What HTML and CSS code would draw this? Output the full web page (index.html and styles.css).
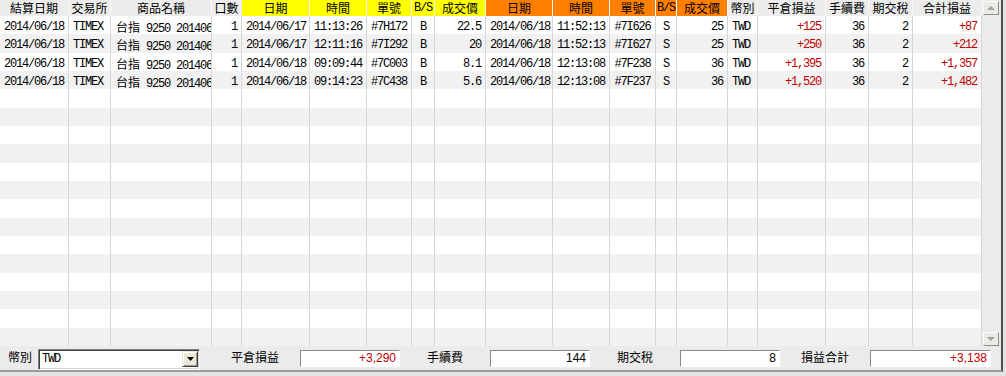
FILE: index.html
```html
<!DOCTYPE html>
<html lang="zh-Hant">
<head>
<meta charset="utf-8">
<title>平倉明細</title>
<link rel="stylesheet" href="styles.css">
</head>
<body>
<div class="window">
  <div class="main">
    <div class="grid">
      <div class="row head">
        <span>結算日期</span><span>交易所</span><span>商品名稱</span><span>口數</span>
        <span class="y">日期</span><span class="y">時間</span><span class="y">單號</span><span class="y mono">B/S</span><span class="y">成交價</span>
        <span class="o">日期</span><span class="o">時間</span><span class="o">單號</span><span class="o mono">B/S</span><span class="o">成交價</span>
        <span>幣別</span><span>平倉損益</span><span>手續費</span><span>期交稅</span><span>合計損益</span>
      </div>
      <div class="body">
        <div class="row"><span>2014/06/18</span><span>TIMEX</span><span><b class="cjk">台指</b> 9250 201406</span><span>1</span><span>2014/06/17</span><span>11:13:26</span><span>#7H172</span><span>B</span><span>22.5</span><span>2014/06/18</span><span>11:52:13</span><span>#7I626</span><span>S</span><span>25</span><span>TWD</span><span>+125</span><span>36</span><span>2</span><span>+87</span></div>
        <div class="row"><span>2014/06/18</span><span>TIMEX</span><span><b class="cjk">台指</b> 9250 201406</span><span>1</span><span>2014/06/17</span><span>12:11:16</span><span>#7I292</span><span>B</span><span>20</span><span>2014/06/18</span><span>11:52:13</span><span>#7I627</span><span>S</span><span>25</span><span>TWD</span><span>+250</span><span>36</span><span>2</span><span>+212</span></div>
        <div class="row"><span>2014/06/18</span><span>TIMEX</span><span><b class="cjk">台指</b> 9250 201406</span><span>1</span><span>2014/06/18</span><span>09:09:44</span><span>#7C003</span><span>B</span><span>8.1</span><span>2014/06/18</span><span>12:13:08</span><span>#7F238</span><span>S</span><span>36</span><span>TWD</span><span>+1,395</span><span>36</span><span>2</span><span>+1,357</span></div>
        <div class="row"><span>2014/06/18</span><span>TIMEX</span><span><b class="cjk">台指</b> 9250 201406</span><span>1</span><span>2014/06/18</span><span>09:14:23</span><span>#7C438</span><span>B</span><span>5.6</span><span>2014/06/18</span><span>12:13:08</span><span>#7F237</span><span>S</span><span>36</span><span>TWD</span><span>+1,520</span><span>36</span><span>2</span><span>+1,482</span></div>
        <div class="row"><span></span><span></span><span></span><span></span><span></span><span></span><span></span><span></span><span></span><span></span><span></span><span></span><span></span><span></span><span></span><span></span><span></span><span></span><span></span></div>
        <div class="row"><span></span><span></span><span></span><span></span><span></span><span></span><span></span><span></span><span></span><span></span><span></span><span></span><span></span><span></span><span></span><span></span><span></span><span></span><span></span></div>
        <div class="row"><span></span><span></span><span></span><span></span><span></span><span></span><span></span><span></span><span></span><span></span><span></span><span></span><span></span><span></span><span></span><span></span><span></span><span></span><span></span></div>
        <div class="row"><span></span><span></span><span></span><span></span><span></span><span></span><span></span><span></span><span></span><span></span><span></span><span></span><span></span><span></span><span></span><span></span><span></span><span></span><span></span></div>
        <div class="row"><span></span><span></span><span></span><span></span><span></span><span></span><span></span><span></span><span></span><span></span><span></span><span></span><span></span><span></span><span></span><span></span><span></span><span></span><span></span></div>
        <div class="row"><span></span><span></span><span></span><span></span><span></span><span></span><span></span><span></span><span></span><span></span><span></span><span></span><span></span><span></span><span></span><span></span><span></span><span></span><span></span></div>
        <div class="row"><span></span><span></span><span></span><span></span><span></span><span></span><span></span><span></span><span></span><span></span><span></span><span></span><span></span><span></span><span></span><span></span><span></span><span></span><span></span></div>
        <div class="row"><span></span><span></span><span></span><span></span><span></span><span></span><span></span><span></span><span></span><span></span><span></span><span></span><span></span><span></span><span></span><span></span><span></span><span></span><span></span></div>
        <div class="row"><span></span><span></span><span></span><span></span><span></span><span></span><span></span><span></span><span></span><span></span><span></span><span></span><span></span><span></span><span></span><span></span><span></span><span></span><span></span></div>
        <div class="row"><span></span><span></span><span></span><span></span><span></span><span></span><span></span><span></span><span></span><span></span><span></span><span></span><span></span><span></span><span></span><span></span><span></span><span></span><span></span></div>
        <div class="row"><span></span><span></span><span></span><span></span><span></span><span></span><span></span><span></span><span></span><span></span><span></span><span></span><span></span><span></span><span></span><span></span><span></span><span></span><span></span></div>
        <div class="row"><span></span><span></span><span></span><span></span><span></span><span></span><span></span><span></span><span></span><span></span><span></span><span></span><span></span><span></span><span></span><span></span><span></span><span></span><span></span></div>
        <div class="row"><span></span><span></span><span></span><span></span><span></span><span></span><span></span><span></span><span></span><span></span><span></span><span></span><span></span><span></span><span></span><span></span><span></span><span></span><span></span></div>
        <div class="row"><span></span><span></span><span></span><span></span><span></span><span></span><span></span><span></span><span></span><span></span><span></span><span></span><span></span><span></span><span></span><span></span><span></span><span></span><span></span></div>
      </div>
    </div>
    <div class="vscroll">
      <div class="sbtn"><i class="arr up"></i></div>
      <div class="sbtn"><i class="arr down"></i></div>
    </div>
  </div>
  <div class="bar">
    <span class="lbl first">幣別</span>
    <div class="combo">
      <span class="combo-text">TWD</span>
      <span class="combo-btn"><svg width="7" height="4" viewBox="0 0 7 4"><polygon points="0,0 7,0 3.5,4" fill="#000"/></svg></span>
    </div>
    <span class="lbl gap-big">平倉損益</span>
    <span class="field red">+3,290</span>
    <span class="lbl">手續費</span>
    <span class="field">144</span>
    <span class="lbl">期交稅</span>
    <span class="field">8</span>
    <span class="lbl">損益合計</span>
    <span class="field wide red">+3,138</span>
  </div>
</div>
</body>
</html>
```

FILE: styles.css
```css
html, body {
  margin: 0;
  padding: 0;
}
body {
  width: 1006px;
  height: 376px;
  overflow: hidden;
  background: #e4e4e4;
  font-family: "Noto Sans CJK TC", sans-serif;
  font-size: 12px;
  color: #000;
}
.window {
  width: 1001px;
  height: 370px;
  border-right: 2px solid #4e4e4e;
  border-bottom: 2px solid #9c9c9c;
  background: #ebebeb;
}
.main {
  display: flex;
  height: 346px;
}
.grid {
  width: 982px;
  display: flex;
  flex-direction: column;
  background: #fff;
}
.row {
  display: grid;
  grid-template-columns: 69px 42px 101px 30px 68px 57px 45px 23px 51px 67px 57px 46px 21px 51px 30px 68px 43px 44px 69px;
}
.row > span {
  display: block;
  box-sizing: border-box;
  overflow: hidden;
  white-space: nowrap;
  border-right: 1px solid #d6d6d6;
}
.head {
  height: 16px;
  flex: none;
  background: #ececec;
}
.head > span {
  text-align: center;
  line-height: 14px;
  padding-top: 1px;
  border-right-color: #f7f7f7;
}
.head > span.y { background: #ffff00; }
.head > span.o { background: #ff8000; }
.head > span.mono {
  font-family: "Liberation Mono", monospace;
  letter-spacing: -1.2px;
  line-height: 15px;
}
.body {
  height: 330px;
  display: grid;
  grid-template-rows: repeat(18, minmax(0, 1fr));
}
.body .row:nth-child(even) { background: #f1f1f1; }
.body .row > span {
  font-family: "Liberation Mono", "Noto Sans CJK TC", monospace;
  letter-spacing: -1.2px;
  line-height: 14px;
  padding: 4px 4px 0;
  text-align: right;
}
.body .row > span:nth-child(2),
.body .row > span:nth-child(15) { text-align: left; }
.body .row > span:nth-child(3) { text-align: left; padding-left: 5px; }
.body .row > span:nth-child(7),
.body .row > span:nth-child(8),
.body .row > span:nth-child(12),
.body .row > span:nth-child(13) { text-align: center; padding-left: 0; padding-right: 0; }
.body .row > span:nth-child(16),
.body .row > span:nth-child(19) { color: #c00000; }
.cjk {
  font-weight: normal;
  font-family: "Noto Sans CJK TC", sans-serif;
  letter-spacing: 0;
}
.vscroll {
  width: 19px;
  box-sizing: border-box;
  padding: 1px 2px 0 1px;
  display: flex;
  flex-direction: column;
  justify-content: space-between;
  background: #ebebeb;
}
.sbtn {
  height: 14px;
  box-sizing: border-box;
  border: 1px solid;
  border-color: #fbfbfb #8c8c8c #8c8c8c #fbfbfb;
  background: #ebeae4;
  display: flex;
  align-items: center;
  justify-content: center;
}
.arr {
  width: 0;
  height: 0;
  border-left: 4px solid transparent;
  border-right: 4px solid transparent;
}
.arr.up { border-bottom: 4px solid #a0a0a0; }
.arr.down { border-top: 4px solid #a0a0a0; }
.bar {
  height: 24px;
  display: flex;
  align-items: flex-start;
  padding-left: 8px;
}
.lbl {
  width: 80px;
  margin-left: 5px;
  text-align: center;
  line-height: 22px;
  white-space: nowrap;
}
.lbl.first {
  width: 24px;
  margin-left: 0;
  margin-right: 6px;
  text-align: left;
}
.lbl.gap-big { margin-left: 15px; }
.combo {
  margin-top: 3px;
  width: 162px;
  height: 21px;
  box-sizing: border-box;
  border: 1px solid;
  border-color: #808080 #ffffff #ffffff #808080;
  box-shadow: inset 1px 1px #404040, inset -1px -1px #d8d8d8;
  background: #fff;
  display: flex;
  align-items: flex-start;
  justify-content: space-between;
  padding: 1px 1px 0 3px;
}
.combo-text {
  font-family: "Liberation Mono", monospace;
  letter-spacing: -1.2px;
  line-height: 17px;
}
.combo-btn {
  width: 16px;
  height: 16px;
  box-sizing: border-box;
  border: 1px solid;
  border-color: #ece9d8 #404040 #404040 #ece9d8;
  box-shadow: inset 1px 1px #ffffff, inset -1px -1px #9a9a9a;
  background: #ece9d8;
  display: flex;
  align-items: center;
  justify-content: center;
}
.combo-btn svg { display: block; }
.field {
  margin-top: 4px;
  margin-left: 5px;
  width: 100px;
  height: 17px;
  box-sizing: border-box;
  border: 1px solid;
  border-color: #8a8a8a #ffffff #ffffff #8a8a8a;
  background: #fff;
  text-align: right;
  padding-right: 3px;
  font-family: "Liberation Sans", sans-serif;
  font-size: 12px;
  line-height: 15px;
}
.field.wide { width: 121px; }
.field.red { color: #c00000; }
```
